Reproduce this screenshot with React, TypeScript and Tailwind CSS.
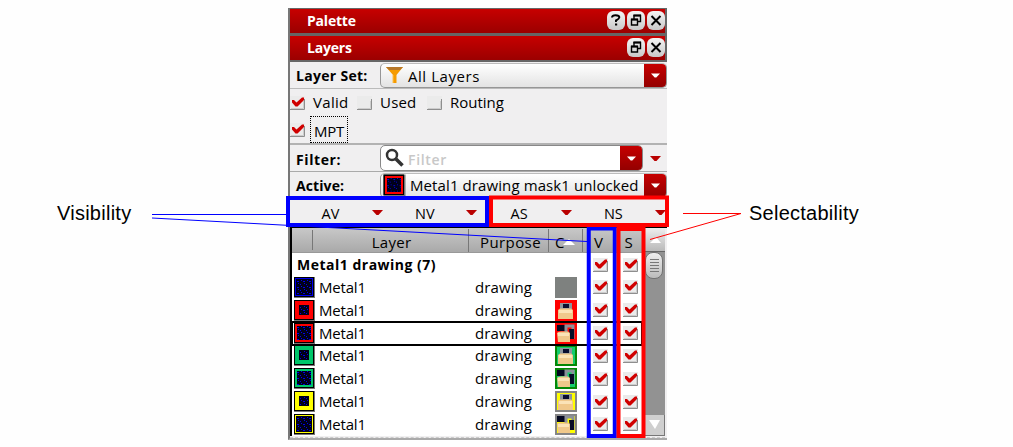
import React from "react";

function Down({ className = "", fill = "#b90000" }: { className?: string; fill?: string }) {
  return (
    <svg width="11" height="5" viewBox="0 0 11 5" className={`shrink-0 ${className}`}>
      <path d="M0 0H11L6.5 5H4.5Z" fill={fill} />
    </svg>
  );
}

function DropButton() {
  return (
    <div className="flex h-full w-[22px] shrink-0 items-center justify-center rounded-r-[4px] bg-gradient-to-b from-[#c60000] to-[#940000]">
      <Down fill="#fff" className="w-[9px]" />
    </div>
  );
}

function Check({ on = true }: { on?: boolean }) {
  return (
    <svg width="15" height="14" viewBox="0 0 15 14" className="shrink-0">
      <rect width="15" height="14" fill="#ebebeb" />
      <path d="M0 13.5H14.5V3" fill="none" stroke="#8e8e8e" />
      <path d="M1 12.5H13.5V5" fill="none" stroke="#cdcdcd" />
      {on && <path d="M2 4H4L6.5 6.5L12 1.5H14V4L7.5 10.5H5.5L2 6.5Z" fill="#d00000" />}
    </svg>
  );
}

function TitleButton({ kind }: { kind: "help" | "float" | "close" }) {
  return (
    <div className="flex h-[19px] w-[18px] items-center justify-center rounded-[6px] bg-gradient-to-b from-[#f4f4f4] to-[#c9c9c9]">
      <svg width="14" height="15" viewBox="0 0 14 15" fill="none" stroke="#000">
        {kind === "help" && (
          <>
            <path d="M3 4.5Q3.2 2.3 6.6 2.3Q10.5 2.3 10.3 4.5Q10.2 5.8 7 7.5V9" strokeWidth="2" />
            <path d="M6 11.5H8.2" strokeWidth="2" />
          </>
        )}
        {kind === "float" && (
          <>
            <path d="M5 6V2.5H11.5V8.5H9" strokeWidth="1.4" />
            <path d="M4.5 2.5H12" strokeWidth="2" />
            <path d="M2.5 6.5H8.5V12H2.5Z" strokeWidth="1.4" />
            <path d="M2 6.5H9" strokeWidth="2" />
          </>
        )}
        {kind === "close" && <path d="M2.5 3L11.5 12M11.5 3L2.5 12" strokeWidth="2" />}
      </svg>
    </div>
  );
}

function TitleBar({ title, help }: { title: string; help?: boolean }) {
  return (
    <div className="flex h-[24px] items-center justify-between bg-gradient-to-b from-[#c70000] to-[#9b0000] pl-[17px]">
      <span className="text-[14px] font-bold tracking-[-0.2px] text-white">{title}</span>
      <div className="flex gap-[2px] pb-[2px]">
        {help && <TitleButton kind="help" />}
        <TitleButton kind="float" />
        <TitleButton kind="close" />
      </div>
    </div>
  );
}

function Swatch({ ring, thick = 3, id }: { ring: string; thick?: number; id: string }) {
  return (
    <svg width="21" height="21" viewBox="0 0 21 21" className="shrink-0" shapeRendering="crispEdges">
      <defs>
        <pattern id={id} width="6" height="6" patternUnits="userSpaceOnUse">
          <rect width="6" height="6" fill="#000018" />
          <path d="M0 1h1v1H0zM3 4h2v1H3zM4 0h1v1H4zM1 3h1v1H1z" fill="#0000e8" />
        </pattern>
      </defs>
      <rect width="21" height="21" fill="#777" />
      <rect width="20" height="20" fill="#000" />
      <rect x="1" y="1" width="18" height="18" fill={ring} />
      <rect x={thick} y={thick} width={20 - thick * 2} height={20 - thick * 2} fill={`url(#${id})`} />
    </svg>
  );
}

function Lock({ open, frame, back }: { open?: boolean; frame: string; back: string }) {
  return (
    <svg width="22" height="21" viewBox="0 0 22 21" className="shrink-0">
      <rect width="22" height="21" fill={frame} />
      <rect x="2" y="2" width="18" height="17" fill={back} />
      {open ? (
        <>
          <path d="M2 2H10V8H2Z" fill="#030720" />
          <path d="M11 9V3H18V16" fill="none" stroke="#8b9099" strokeWidth="3" />
          <path d="M14 6H19V16H15Z" fill="#070b26" />
          <path d="M2 10Q3 8.5 6 8.5H13L15 10V19H3Z" fill="#f0c88b" />
          <path d="M3 10H14V13H3Z" fill="#fbe3b7" />
        </>
      ) : (
        <>
          <path d="M5 9V3H17V9Z" fill="#8d949c" />
          <path d="M8 8V4H14V8Z" fill="#080d30" />
          <path d="M3 10L5 8.5H16L18 10V19H3Z" fill="#f0c88b" />
          <path d="M4 10H17V13H4Z" fill="#fbe3b7" />
        </>
      )}
    </svg>
  );
}

interface Row {
  ring: string;
  thick: number;
  lock?: "open" | "shut";
  frame?: string;
  back?: string;
  active?: boolean;
}

const rows: Row[] = [
  { ring: "#0000ee", thick: 2 },
  { ring: "#ff0000", thick: 5, lock: "shut", frame: "#ff0000", back: "#ff0000" },
  { ring: "#ff0000", thick: 3, lock: "open", frame: "#ff0000", back: "#ff0000", active: true },
  { ring: "#00c66a", thick: 5, lock: "shut", frame: "#068806", back: "#13cc6d" },
  { ring: "#00c66a", thick: 3, lock: "open", frame: "#068806", back: "#13cc6d" },
  { ring: "#ffff00", thick: 5, lock: "shut", frame: "#858585", back: "#ffff00" },
  { ring: "#ffff00", thick: 2, lock: "open", frame: "#858585", back: "#ffff00" },
];

function Checks() {
  return (
    <div className="flex gap-[15px]">
      <Check />
      <Check />
    </div>
  );
}

function LayerRow({ row, index }: { row: Row; index: number }) {
  return (
    <div
      className={`flex h-[22.85px] w-[350px] items-center ${row.active ? "outline-2 -outline-offset-1 outline-black" : ""}`}
    >
      <div className="w-[27px] pl-[2px]">
        <Swatch ring={row.ring} thick={row.thick} id={`layer-${index}`} />
      </div>
      <span className="w-[156px] text-[15px] tracking-[-0.2px]">Metal1</span>
      <span className="w-[80px] text-[15px] tracking-[0.1px]">drawing</span>
      <div className="w-[38px]">
        {row.lock ? (
          <Lock open={row.lock === "open"} frame={row.frame ?? ""} back={row.back ?? ""} />
        ) : (
          <div className="h-[21px] w-[22px] bg-[#7e817f]" />
        )}
      </div>
      <Checks />
    </div>
  );
}

function Option({ label, on, className = "" }: { label: string; on?: boolean; className?: string }) {
  return (
    <div className={`flex items-center gap-[8px] text-[15px] ${className}`}>
      <Check on={on} />
      <span>{label}</span>
    </div>
  );
}

const combo =
  "flex h-[25px] items-center rounded-[5px] border border-[#969696] border-t-[#bcbcbc] bg-gradient-to-b from-white to-[#e3e3e3]";

function ToggleButton({ label }: { label: string }) {
  return (
    <div className="flex w-[94.3px] shrink-0 items-center gap-[13px]">
      <span className="w-[57px] pt-[4px] text-center text-[14.5px]">{label}</span>
      <Down />
    </div>
  );
}

export default function App() {
  return (
    <div className="relative h-[447px] w-[1013px] overflow-hidden bg-[#fefefe] font-['Open_Sans','Noto_Sans',sans-serif] leading-none text-black">
      <div className="flex pt-[8px]">
        <div className="flex w-[288px] items-start pt-[195px] pl-[57px]">
          <span className="font-['Liberation_Sans',sans-serif] text-[20px] tracking-[0.25px]">Visibility</span>
        </div>

        <div className="h-[432px] w-[379px] shrink-0 overflow-hidden border-b-2 border-l-2 border-b-[#aaa] border-l-[#777] bg-[#f0eff0]">
          <div className="flex flex-col gap-[3px] border-t border-r-2 border-b-2 border-[#666] bg-[#666]">
            <TitleBar title="Palette" help />
            <TitleBar title="Layers" />
          </div>

          <div className="flex h-[27px] items-center border-b border-[#bbb] pl-[6px]">
            <span className="w-[84px] shrink-0 pt-[2px] text-[14px] font-bold tracking-[0.3px]">Layer Set:</span>
            <div className={`${combo} w-[287px]`}>
              <svg width="17" height="18" viewBox="0 0 17 18" className="ml-[5px]">
                <path d="M0 1H17L10.5 9V17H7V9Z" fill="#f59b00" />
                <path d="M0 1H17L14 4H3Z" fill="#b77728" />
                <path d="M7 9V17" stroke="#ffc14d" />
              </svg>
              <span className="ml-[5px] flex-1 pt-[2px] text-[15px] tracking-[0.55px]">All Layers</span>
              <DropButton />
            </div>
          </div>

          <div className="flex h-[56px] flex-col border-b-2 border-[#b2b2b2]">
            <div className="flex h-[27px] items-center">
              <Option label="Valid" on className="w-[67px] tracking-[0.3px]" />
              <Option label="Used" on={false} className="w-[70px] tracking-[0.2px]" />
              <Option label="Routing" on={false} />
            </div>
            <div className="flex h-[27px] items-center gap-[5px]">
              <Check />
              <span className="flex h-[27px] w-[38px] items-center justify-center border border-dotted border-black pt-[3px] text-[15px] tracking-[-0.2px]">
                MPT
              </span>
            </div>
          </div>

          <div className="flex h-[27px] items-center border-b border-[#aaa] pl-[6px]">
            <span className="w-[84px] shrink-0 pt-[3px] text-[14px] font-bold tracking-[0.6px]">Filter:</span>
            <div className="flex h-[26px] w-[263px] items-center rounded-[5px] border border-[#888] bg-white">
              <svg width="20" height="20" viewBox="0 0 20 20" fill="none" stroke="#333" className="ml-[4px]">
                <circle cx="7" cy="7" r="5" strokeWidth="2.5" />
                <path d="M11 11L17.5 17.5" strokeWidth="3.5" />
              </svg>
              <span className="ml-[3px] flex-1 pt-[3px] text-[14px] font-semibold tracking-[0.7px] text-[#c8c8c8]">
                Filter
              </span>
              <DropButton />
            </div>
            <Down className="ml-[7px]" />
          </div>

          <div className="flex h-[26px] items-center pl-[6px]">
            <span className="w-[84px] shrink-0 pt-[2px] text-[14px] font-bold tracking-[0.1px]">Active:</span>
            <div className={`${combo} w-[287px]`}>
              <div className="ml-[3px] scale-105">
                <Swatch ring="#f00" thick={3} id="active" />
              </div>
              <span className="ml-[5px] flex-1 pt-[1px] text-[15px] tracking-[0.1px] whitespace-nowrap">
                Metal1 drawing mask1 unlocked
              </span>
              <DropButton />
            </div>
          </div>

          <div className="flex h-[29px] items-center pl-[12px]">
            <ToggleButton label="AV" />
            <ToggleButton label="NV" />
            <ToggleButton label="AS" />
            <ToggleButton label="NS" />
          </div>

          <div className="flex h-[209px] border-t border-l-2 border-black">
            <div className="w-[353px] shrink-0 overflow-hidden bg-white">
              <div className="flex h-[25px] items-center border-b border-[#999] bg-gradient-to-b from-[#c8c8c8] to-[#a9a9a9] text-center text-[15px] leading-[26px]">
                <span className="h-[20px] w-[21px] border-r border-[#777]" />
                <span className="h-[23px] w-[156px] border-r border-[#777] pl-[2px] tracking-[0.3px]">Layer</span>
                <span className="h-[23px] w-[80px] border-r border-[#777] pl-[4px] tracking-[0.4px]">Purpose</span>
                <span className="flex h-[23px] w-[34px] items-center border-r border-[#777] pt-[3px] pl-[6px]">
                  C
                  <svg width="12" height="6" viewBox="0 0 12 6" className="-ml-[1px] shrink-0">
                    <path d="M0 6H12L6 0Z" fill="#fff" />
                  </svg>
                </span>
                <span className="h-[23px] w-[31px]">V</span>
                <span className="h-[23px] w-[29px]">S</span>
              </div>
              <div className="flex h-[23px] w-[350px] items-center pl-[5px]">
                <span className="w-[296px] pt-[1px] text-[14px] font-bold tracking-[0.5px]">Metal1 drawing (7)</span>
                <Checks />
              </div>
              {rows.map((row, i) => (
                <LayerRow key={i} row={row} index={i} />
              ))}
            </div>
            <div className="flex w-[20px] shrink-0 flex-col bg-[#929292]">
              <div className="flex h-[24px] items-center justify-center border-b border-[#666] bg-gradient-to-b from-[#eee] to-[#b9b9b9]">
                <svg width="11" height="6">
                  <path d="M0 6H11L6 0Z" fill="#fff" />
                </svg>
              </div>
              <div className="flex h-[27px] w-[18px] flex-col items-center justify-center gap-[2px] rounded-[8px] border border-[#727272] bg-gradient-to-b from-[#eee] to-[#bbb]">
                <i className="h-px w-[9px] bg-[#777]" />
                <i className="h-px w-[9px] bg-[#777]" />
                <i className="h-px w-[9px] bg-[#777]" />
                <i className="h-px w-[9px] bg-[#777]" />
                <i className="h-px w-[9px] bg-[#777]" />
              </div>
              <div className="mt-auto flex h-[21px] items-center justify-center border-r border-b border-[#777] bg-[#cfcfcf]">
                <svg width="11" height="10">
                  <path d="M0 0H11L6 9Z" fill="#fff" />
                </svg>
              </div>
            </div>
          </div>
          <div className="mt-[1px] w-[375px] border-t border-dashed border-[#ccc]" />
        </div>

        <div className="pt-[195px] pl-[82px]">
          <span className="font-['Liberation_Sans',sans-serif] text-[20px] tracking-[0.25px]">Selectability</span>
        </div>
      </div>

      <svg className="absolute inset-0" width="1013" height="447" fill="none">
        <path d="M152 214.5H286M152 218L587 241.5" stroke="#0000ff" />
        <path d="M683 213.5H741L650 239.5" stroke="#ff0000" />
        <rect x="588.75" y="228.5" width="26" height="207.5" stroke="#0000ff" strokeWidth="4" />
        <rect x="618.5" y="229" width="25" height="207" stroke="#ff0000" strokeWidth="4" />
        <rect x="288" y="198" width="199" height="27" stroke="#0000ff" strokeWidth="4" />
        <rect x="491" y="197.5" width="176" height="27.5" stroke="#ff0000" strokeWidth="4" />
      </svg>
    </div>
  );
}
